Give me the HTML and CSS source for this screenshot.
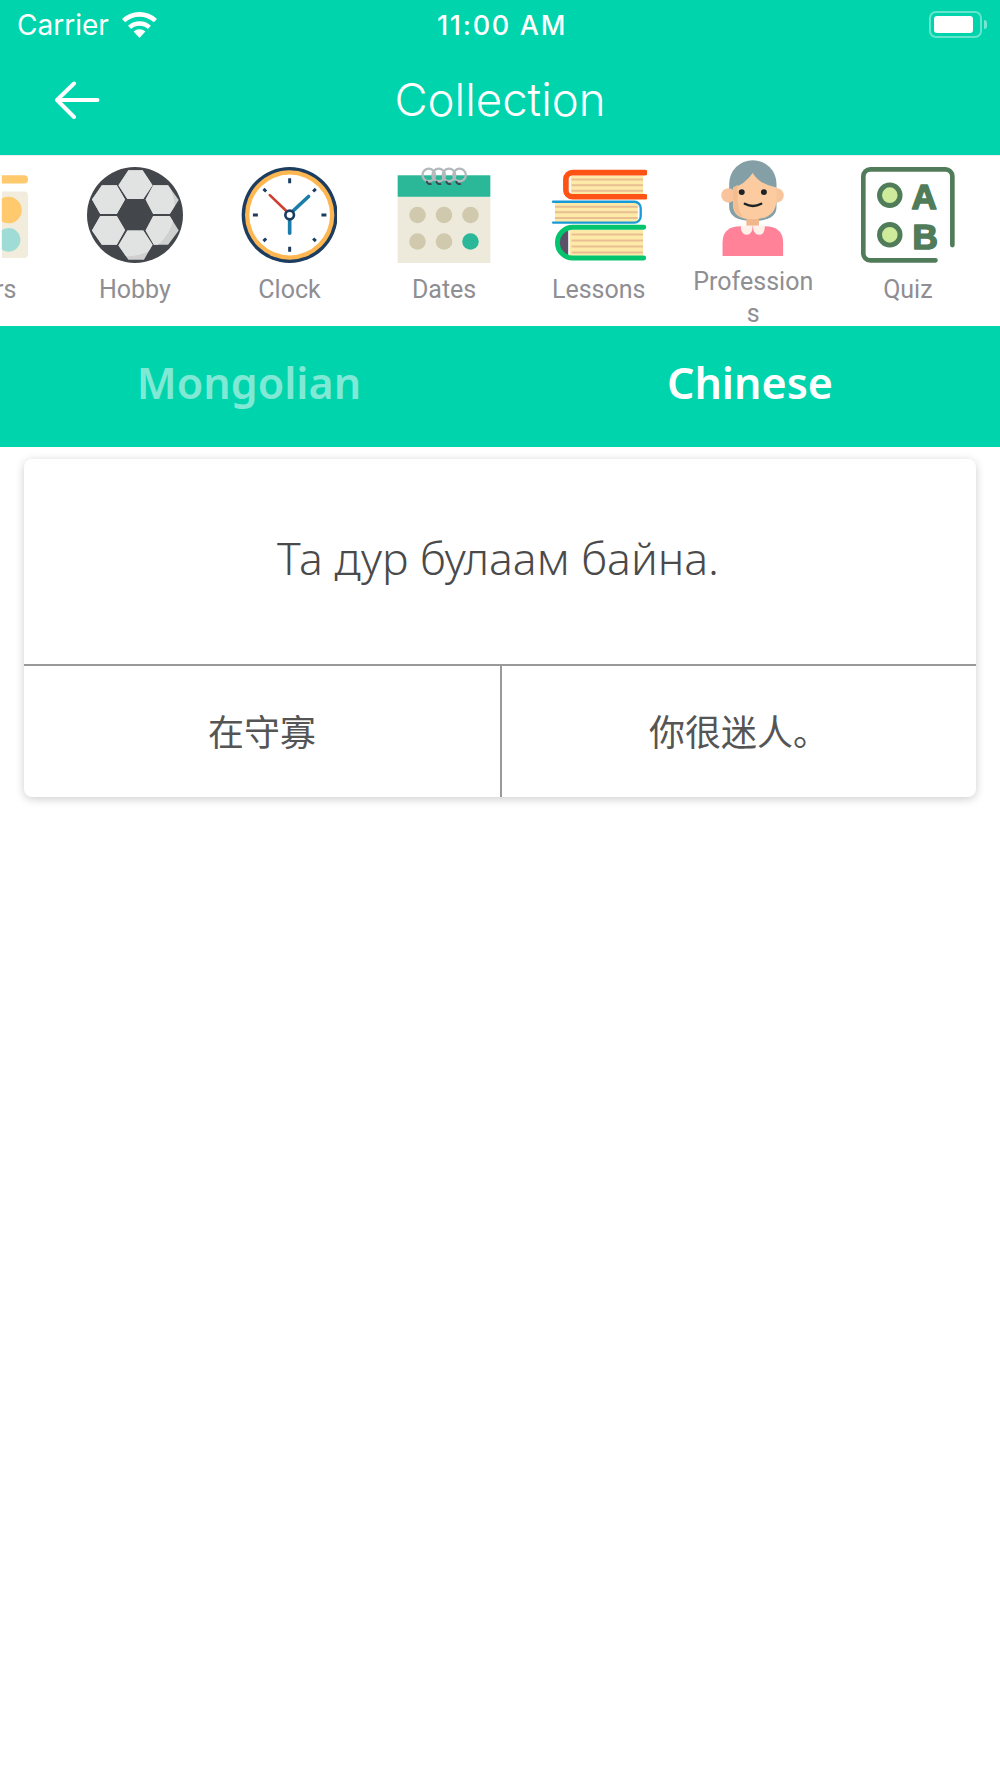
FILE: index.html
```html
<!DOCTYPE html>
<html lang="en">
<head>
<meta charset="utf-8">
<title>Collection</title>
<link rel="stylesheet" href="styles.css">
</head>
<body>
<header class="top">
  <div class="status">
    <div class="status-left">
      <span class="carrier">Carrier</span>
      <svg class="wifi" viewBox="0 0 37 27"><path d="M18.5 27 12.6 20.6a8.6 8.6 0 0 1 11.8 0z" fill="#fff"/><path d="M8.6 16.4a14.6 14.6 0 0 1 19.8 0" fill="none" stroke="#fff" stroke-width="4.6"/><path d="M2.6 9.6a23.4 23.4 0 0 1 31.8 0" fill="none" stroke="#fff" stroke-width="4.6"/></svg>
    </div>
    <span class="time">11:00 AM</span>
    <div class="status-right">
      <div class="battery"><div class="battery-fill"></div></div>
      <div class="battery-tip"></div>
    </div>
  </div>
  <div class="nav">
    <svg class="back" viewBox="0 0 46 38"><path d="M43.5 19H3M20 2.500 3 19l17 17" fill="none" stroke="#fff" stroke-width="4" stroke-linecap="round" stroke-linejoin="round"/></svg>
    <h1 class="title">Collection</h1>
  </div>
</header>

<nav class="strip">
  <div class="strip-row">
    <div class="item">
      <svg class="icon" viewBox="-203 50 290 290">
        <clipPath id="cutl"><rect x="8" y="50" width="100" height="290"/></clipPath>
        <g clip-path="url(#cutl)">
          <rect x="-20" y="75" width="107" height="25" rx="12" fill="#ffc96d"/>
          <rect x="-20" y="124" width="107" height="201" rx="12" fill="#f1ecdc"/>
          <circle cx="28" cy="180" r="40" fill="#ffc96d"/>
          <circle cx="28" cy="270" r="36" fill="#9fdcd6"/>
        </g>
      </svg>
      <span class="label">Colors</span>
    </div>
    <div class="item">
      <svg class="icon" viewBox="260 50 290 290">
        <defs>
          <clipPath id="ballclip"><circle cx="405" cy="195" r="144"/></clipPath>
          <clipPath id="shadeclip"><circle cx="380" cy="175" r="145"/></clipPath>
          <path id="hexes" d="M385 60h43l30 45-28 42h-48l-27-42zM305 105h45l25 43-25 44h-50l-25-44zM460 105h45l32 45-27 42h-50l-23-44zM300 198h50l25 42-25 45h-45l-30-43zM460 198h50l27 44-32 43h-43l-25-43zM382 242h48l28 43-26 45h-47l-30-43z"/>
        </defs>
        <circle cx="405" cy="195" r="145" fill="#43474b"/>
        <g clip-path="url(#ballclip)">
          <use href="#hexes" fill="#cfd0cf"/>
          <g clip-path="url(#shadeclip)"><use href="#hexes" fill="#e1e3e2"/></g>
        </g>
      </svg>
      <span class="label">Hobby</span>
    </div>
    <div class="item">
      <svg class="icon" viewBox="723 50 290 290">
        <circle cx="870" cy="195" r="145" fill="#1c3d5f"/>
        <circle cx="870" cy="195" r="135" fill="#fdb650"/>
        <circle cx="870" cy="195" r="122" fill="#fff"/>
        <path d="M870 84v15M870 291v15M759 195h15M966 195h15" stroke="#1c3d5f" stroke-width="9" fill="none"/>
        <path d="M791 116l8 8M941 266l8 8M949 116l-8 8M791 274l8-8" stroke="#1c3d5f" stroke-width="9" fill="none"/>
        <path d="M860 183 810 135" stroke="#cf3f2e" stroke-width="8" stroke-linecap="round"/>
        <path d="M880 183 927 139M870 208v42" stroke="#1b7dac" stroke-width="11" stroke-linecap="round"/>
        <circle cx="870" cy="195" r="13" fill="#fff" stroke="#1c3d5f" stroke-width="8"/>
      </svg>
      <span class="label">Clock</span>
    </div>
    <div class="item">
      <svg class="icon" viewBox="168 50 290 290">
        <rect x="173" y="140" width="280" height="200" fill="#edeadb"/>
        <rect x="173" y="75" width="280" height="65" fill="#2bb899"/>
        <g fill="#d0c9ad"><circle cx="233" cy="195" r="25"/><circle cx="313" cy="195" r="25"/><circle cx="393" cy="195" r="25"/><circle cx="233" cy="275" r="25"/><circle cx="313" cy="275" r="25"/></g>
        <circle cx="393" cy="275" r="25" fill="#2bb899"/>
        <g fill="none" stroke="#b3b9bc" stroke-width="7"><circle cx="267" cy="74" r="19"/><circle cx="297" cy="74" r="19"/><circle cx="328" cy="74" r="19"/><circle cx="360" cy="74" r="19"/></g>
        <path d="M261 92a9 9 0 0 0 14 8M290 92a9 9 0 0 0 14 8M320 92a9 9 0 0 0 14 8M350 92a9 9 0 0 0 14 8" fill="none" stroke="#3f4850" stroke-width="6"/>
      </svg>
      <span class="label">Dates</span>
    </div>
    <div class="item">
      <svg class="icon" viewBox="630 50 290 290">
        <rect x="690" y="76" width="218" height="56" fill="#fdeaa8"/>
        <path d="M692 88h216M692 105h216M692 122h216" stroke="#e9bf92" stroke-width="6"/>
        <path d="M914 67H695a20 20 0 0 0-20 20v33a20 20 0 0 0 20 20h219" fill="none" stroke="#ff5215" stroke-width="17" stroke-linecap="round"/>
        <rect x="642" y="158" width="250" height="58" fill="#fdeaa8"/>
        <path d="M642 170h250M642 187h250M642 204h250" stroke="#e9bf92" stroke-width="6"/>
        <path d="M636 155h246a19 19 0 0 1 19 19v25a19 19 0 0 1-19 19H636" fill="none" stroke="#1a9ad6" stroke-width="7" stroke-linecap="round"/>
        <path d="M682 242h-12q-20 14-20 38t20 37h12z" fill="#5c5068"/>
        <rect x="686" y="240" width="222" height="78" fill="#fdeaa8"/>
        <path d="M692 254h216M692 272h216M692 290h216M692 308h216" stroke="#e9bf92" stroke-width="6"/>
        <path d="M910 232H696a46 46 0 0 0 0 93h214" fill="none" stroke="#05c46e" stroke-width="15" stroke-linecap="round"/>
      </svg>
      <span class="label">Lessons</span>
    </div>
    <div class="item item-tall">
      <svg class="icon" viewBox="137 28 290 290">
        <path d="M210 170V100a71 71 0 0 1 143 0v70q0 42-71 42t-72-42z" fill="#84a0a6"/>
        <circle cx="208" cy="135" r="22" fill="#f9c49b"/><circle cx="353" cy="135" r="22" fill="#f9c49b"/>
        <rect x="262" y="195" width="38" height="40" fill="#efb78b"/>
        <path d="M190 318v-40q0-50 55-50h72q56 0 56 50v40z" fill="#ff8298"/>
        <path d="M245 226h36q0 28-18 28t-18-28zM282 226h36q0 28-18 28t-18-28z" fill="#fdf1ea"/>
        <path d="M281 67q22 36 72 44v40q-3 56-71 56t-60-56v-40q34-8 59-44z" fill="#fccb9f"/>
        <path d="M222 111v40q-3 38 30 50-14-16-16-50v-48z" fill="#f4bd90"/>
        <circle cx="248" cy="125" r="9" fill="#1f2326"/><circle cx="315" cy="125" r="9" fill="#1f2326"/>
        <path d="M257 160q25 14 50 0" fill="none" stroke="#1f2326" stroke-width="7" stroke-linecap="round"/>
      </svg>
      <span class="label label-wrap">Professions</span>
    </div>
    <div class="item">
      <svg class="icon" viewBox="600 50 290 290">
        <path d="M879 286V78a21 21 0 0 0-21-21H631a21 21 0 0 0-21 21v233a21 21 0 0 0 21 21h197" fill="none" stroke="#507c5a" stroke-width="14" stroke-linecap="round"/>
        <circle cx="690" cy="135" r="31" fill="#cdeb9a" stroke="#507c5a" stroke-width="15"/>
        <circle cx="690" cy="255" r="31" fill="#cdeb9a" stroke="#507c5a" stroke-width="15"/>
        <text x="794" y="176" class="quiz-letter">A</text>
        <text x="797" y="299" class="quiz-letter">B</text>
      </svg>
      <span class="label">Quiz</span>
    </div>
  </div>
</nav>

<div class="tabs">
  <span class="tab tab-dim">Mongolian</span>
  <span class="tab">Chinese</span>
</div>

<section class="card">
  <div class="question">Та дур булаам байна.</div>
  <div class="answers">
    <div class="answer">在守寡</div>
    <div class="answer">你很迷人。</div>
  </div>
</section>
</body>
</html>
```
FILE: styles.css
```css
* { box-sizing: border-box; }
html, body { margin: 0; padding: 0; background: #fff; }
body { width: 1000px; height: 1778px; overflow: hidden; font-family: "Inter", "Liberation Sans", sans-serif; }

.top { background: #00d4ac; color: #fff; height: 155px; }
.status { height: 52px; padding: 9px 13px 0 17px; display: grid; grid-template-columns: 1fr auto 1fr; align-items: start; }
.status-left { display: flex; align-items: flex-start; gap: 12px; }
.carrier { font-size: 28px; line-height: 33px; font-weight: 400; }
.wifi { width: 37px; height: 27px; margin-top: 2px; }
.time { font-size: 27px; line-height: 33px; font-weight: 500; letter-spacing: 1.7px; }
.status-right { display: flex; justify-content: flex-end; align-items: center; gap: 2px; margin-top: 2px; }
.battery { width: 53px; height: 27px; border: 2px solid rgba(255,255,255,.4); border-radius: 7px; padding: 3px; }
.battery-fill { width: 39px; height: 17px; background: #fff; border-radius: 3px; }
.battery-tip { width: 3px; height: 9px; background: rgba(255,255,255,.45); border-radius: 0 3px 3px 0; }

.nav { height: 103px; position: relative; display: flex; align-items: center; justify-content: center; padding-bottom: 7px; }
.back { position: absolute; left: 54px; top: 29px; width: 46px; height: 38px; }
.title { margin: 0; font-size: 45.500px; line-height: 60px; font-weight: 350; }

.strip { height: 171px; overflow-x: clip; border-top: 1px solid #eee; background: #fff; }
.strip-row { display: flex; margin-left: -97px; padding-top: 11px; }
.item { flex: 0 0 154.6px; display: flex; flex-direction: column; align-items: center; }
.item-tall { margin-top: -7px; }
.icon { width: 96px; height: 96px; flex: none; }
.label { margin-top: 11px; width: 125px; text-align: center; font-size: 25px; line-height: 32px; color: #8e8e93; font-family: Roboto, sans-serif; }
.label-wrap { margin-top: 10px; overflow-wrap: anywhere; }
.quiz-letter { font-family: "Liberation Sans", sans-serif; font-weight: 700; font-size: 106px; text-anchor: middle; fill: #507c5a; stroke: #507c5a; stroke-width: 5px; stroke-linejoin: round; }

.tabs { background: #00d4ac; height: 121px; display: grid; grid-template-columns: 1fr 1fr; align-items: center; padding-bottom: 8px; }
.tab { text-align: center; color: #fff; font-size: 43px; line-height: 58px; font-weight: 600; font-family: "Noto Sans", sans-serif; }
.tab-dim { color: rgba(255,255,255,.5); margin-right: 2px; }

.card { margin: 12px 24px 0; height: 338px; background: #fff; border-radius: 8px; box-shadow: 0 2px 10px rgba(0,0,0,.2); display: flex; flex-direction: column; overflow: hidden; }
.question { height: 207px; flex: none; display: flex; align-items: center; justify-content: center; padding: 0 4px 9px 0; font-size: 44.700px; font-weight: 300; color: #4a4a4a; font-family: "Noto Sans", sans-serif; border-bottom: 2.500px solid #999; }
.answers { flex: 1; display: grid; grid-template-columns: 1fr 1fr; }
.answer { display: flex; align-items: center; justify-content: center; font-size: 36px; padding-bottom: 3px; color: #555; font-family: "Noto Sans CJK SC", sans-serif; font-weight: 400; }
.answer + .answer { border-left: 2px solid #999; }
```
